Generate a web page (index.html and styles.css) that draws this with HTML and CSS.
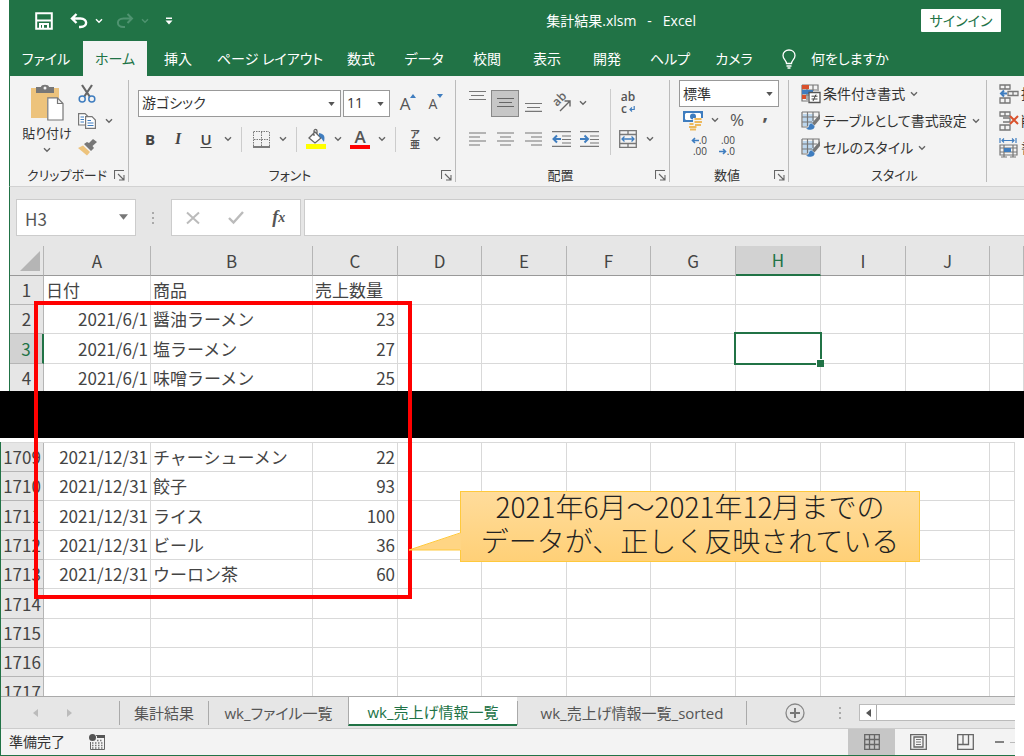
FILE: index.html
```html
<!DOCTYPE html>
<html lang="ja">
<head>
<meta charset="utf-8">
<title>集計結果.xlsm - Excel</title>
<link rel="stylesheet" href="styles.css">
</head>
<body>
<svg class="defs" aria-hidden="true">
  <symbol id="chev" viewBox="0 0 8 6"><path d="M1 1.2 4 4.2 7 1.2" fill="none" stroke="currentColor" stroke-width="1.4"/></symbol>
  <symbol id="tri" viewBox="0 0 8 5"><path d="M0 0H8L4 5Z" fill="currentColor"/></symbol>
  <symbol id="launch" viewBox="0 0 11 11"><path d="M.5 9V.5H10M4 4 9.500 9.500M10 5V10H5" fill="none" stroke="#666" stroke-width="1.100"/></symbol>
  <symbol id="brushgrid" viewBox="0 0 20 20"><rect x="2" y="3" width="11" height="12" fill="#bdd7ee"/><path d="M1 1H18V7M1 1V16H7M1 6H16M1 11H11M6.500 1V15M12 1V10" fill="none" stroke="#777" stroke-width="1.200"/><path d="M19 3 11 12 13.500 14.500 19 8Z" fill="#777"/><path d="M10.500 12.500C7 13 9 17 5 17.500 8 20 14 19 13.500 15Z" fill="#3f7dbf"/></symbol>
</svg>

<main class="stage">
<section class="window window-top">
  <header class="titlebar">
    <div class="quick">
      <button class="q save" aria-label="上書き保存"><svg width="18" height="18" viewBox="0 0 18 18"><path d="M1.200 1.200H16.800V16.800H1.200ZM1.500 8.500H16.500M5 17V12H13V17M8 13V16" fill="none" stroke="#fff" stroke-width="2"/></svg></button>
      <button class="q undo" aria-label="元に戻す"><svg width="18" height="16" viewBox="0 0 18 16"><path d="M6.500 1 2 5.500 6.500 10M2.500 5.500H10.500C18 5.500 18 14 10.500 14H9" fill="none" stroke="#fff" stroke-width="2.400"/></svg></button>
      <button class="q mini" aria-label="元に戻す一覧"><svg width="8" height="6"><use href="#chev"/></svg></button>
      <button class="q redo" aria-label="やり直し"><svg width="18" height="16" viewBox="0 0 18 16"><path d="M11.500 1 16 5.500 11.500 10M15.500 5.500H7.500C0 5.500 0 14 7.500 14H9" fill="none" stroke="#4f9370" stroke-width="2"/></svg></button>
      <button class="q mini dim" aria-label="やり直し一覧"><svg width="8" height="6"><use href="#chev"/></svg></button>
      <button class="q custom" aria-label="クイック アクセス ツール バーのカスタマイズ"><svg width="8" height="8" viewBox="0 0 8 8"><path d="M1 .5H7V2H1ZM.5 3.500H7.500L4 7.500Z" fill="#fff"/></svg></button>
    </div>
    <h1 class="doc">集計結果.xlsm&nbsp;&nbsp; -&nbsp;&nbsp; Excel</h1>
    <div class="account"><button class="signin">サインイン</button></div>
  </header>
  <nav class="tabs">
    <button>ファイル</button><button class="on">ホーム</button><button>挿入</button><button>ページ レイアウト</button><button>数式</button><button>データ</button><button>校閲</button><button>表示</button><button>開発</button><button>ヘルプ</button><button>カメラ</button>
    <button class="tell"><svg width="14" height="20" viewBox="0 0 14 20"><path d="M4.500 14.500C4.500 11 1 10.500 1 6.500 1 3 3.800 1 7 1S13 3 13 6.500C13 10.500 9.500 11 9.500 14.500ZM4.500 17H9.500M5.500 19H8.500" fill="none" stroke="#fff" stroke-width="1.300"/></svg>何をしますか</button>
  </nav>

  <div class="ribbon">
    <section class="group">
      <div class="tools clip">
        <button class="paste"><svg width="35" height="36" viewBox="0 0 35 36"><path d="M1 3H29V13H17V33H1Z" fill="#edc37c"/><path d="M6 2H11C11-1 19-1 19 2H24V8H6Z" fill="#777"/><circle cx="15" cy="3" r="1.500" fill="#f3f3f3"/><path d="M17.800 12.800H27.500L33 18.500V35H17.800ZM27.500 12.800V18.500H33" fill="#fff" stroke="#777" stroke-width="1.200"/></svg><span>貼り付け</span><svg class="cv" width="8" height="6"><use href="#chev"/></svg></button>
        <div class="clipcol">
          <button aria-label="切り取り"><svg width="18" height="18" viewBox="0 0 18 18"><path d="M4 0 12 12M14 0 6 12" stroke="#666" stroke-width="2.200"/><circle cx="4.200" cy="14" r="3" fill="none" stroke="#3f7dbf" stroke-width="1.500"/><circle cx="13.800" cy="14" r="3" fill="none" stroke="#3f7dbf" stroke-width="1.500"/></svg></button>
          <div class="pair"><button aria-label="コピー"><svg width="18" height="16" viewBox="0 0 18 16"><path d="M.6.6H7L10 3.500V12H.6Z" fill="#fff" stroke="#777" stroke-width="1.200"/><path d="M2.500 4H6M2.500 6.500H6M2.500 9H6" stroke="#3f7dbf"/><path d="M7.600 3.600H14L17.400 7V15.400H7.600Z" fill="#fff" stroke="#777" stroke-width="1.200"/><path d="M9.500 7.500H13M9.500 10H15.500M9.500 12.500H15.500" stroke="#3f7dbf" stroke-width="1.200"/></svg></button><button class="cvb" aria-label="コピーの一覧"><svg width="8" height="6"><use href="#chev"/></svg></button></div>
          <button aria-label="書式のコピー"><svg width="20" height="17" viewBox="0 0 20 17"><path d="M15 0 19 3 14.500 7 16 9 13 12 6 5 9 3 11 4Z" fill="#777"/><path d="M5 6.500 12 13 9 16.500 0 9Z" fill="#edc37c"/></svg></button>
        </div>
      </div>
      <footer><span>クリップボード</span><button aria-label="クリップボードの詳細"><svg width="11" height="11"><use href="#launch"/></svg></button></footer>
    </section>

    <section class="group">
      <div class="tools stack">
        <div class="row first">
          <label class="combo face"><select aria-label="フォント"><option>游ゴシック</option></select><svg width="7" height="4"><use href="#tri"/></svg></label>
          <label class="combo size"><select aria-label="フォント サイズ"><option>11</option></select><svg width="7" height="4"><use href="#tri"/></svg></label>
          <button class="b28 grow" aria-label="拡大"><span>A</span><svg width="6" height="4" viewBox="0 0 6 4"><path d="M0 4H6L3 0Z" fill="#3f7dbf"/></svg></button>
          <button class="b28 grow shrink" aria-label="縮小"><span>A</span><svg width="6" height="4" viewBox="0 0 6 4"><path d="M0 0H6L3 4Z" fill="#3f7dbf"/></svg></button>
        </div>
        <div class="row">
          <button class="b28 bold">B</button><button class="b28 ital">I</button><button class="b28 under">U</button><button class="cvb" aria-label="下線の一覧"><svg width="8" height="6"><use href="#chev"/></svg></button><i class="sep"></i>
          <button class="b28" aria-label="罫線"><svg width="17" height="17" viewBox="0 0 17 17"><path d="M.5 1V15M.5.5H16M16.500 1V15M8.500 1V15M1 8.500H16" fill="none" stroke="#777" stroke-dasharray="1.500 1"/><path d="M0 16H17" stroke="#555" stroke-width="1.500"/></svg></button><button class="cvb" aria-label="罫線の一覧"><svg width="8" height="6"><use href="#chev"/></svg></button><i class="sep"></i>
          <button class="b28" aria-label="塗りつぶしの色"><svg width="20" height="20" viewBox="0 0 20 20"><path d="M9 3 15 9 9 14 3 9ZM8 7V2C8 0 11 0 11 2V5" fill="#fff" stroke="#666" stroke-width="1.300"/><path d="M13 4C19 5 19 8 18 13 16 11 16 9 13 7Z" fill="#3f7dbf"/><path d="M0 15H20V20H0Z" fill="#ff0"/></svg></button><button class="cvb" aria-label="塗りつぶしの一覧"><svg width="8" height="6"><use href="#chev"/></svg></button>
          <button class="b28 fontcolor" aria-label="フォントの色">A</button><button class="cvb" aria-label="フォントの色の一覧"><svg width="8" height="6"><use href="#chev"/></svg></button><i class="sep"></i>
          <button class="b28 ruby" aria-label="ふりがな"><span>ア</span><span>亜</span></button><button class="cvb" aria-label="ふりがなの一覧"><svg width="8" height="6"><use href="#chev"/></svg></button>
        </div>
      </div>
      <footer><span>フォント</span><button aria-label="フォントの詳細"><svg width="11" height="11"><use href="#launch"/></svg></button></footer>
    </section>

    <section class="group">
      <div class="tools align">
        <div class="stack">
          <div class="row first">
            <button class="b28" aria-label="上揃え"><svg class="lift" width="17" height="18" viewBox="0 0 17 18"><path d="M0 1.500H17M2 5.500H15M0 9.500H17" stroke="#777" stroke-width="1.200"/></svg></button>
            <button class="b28 pressed" aria-label="上下中央揃え"><svg width="17" height="18" viewBox="0 0 17 18"><path d="M0 4.500H17M2 8.500H15M0 12.500H17" stroke="#666" stroke-width="1.200"/></svg></button>
            <button class="b28" aria-label="下揃え"><svg width="17" height="18" viewBox="0 0 17 18"><path d="M0 9.500H17M2 13.500H15M0 17.400H17" stroke="#777" stroke-width="1.200"/></svg></button>
            <button class="b28" aria-label="方向"><svg width="20" height="20" viewBox="0 0 20 20"><text x="6" y="14" transform="rotate(-45 6 14)" font-family="Open Sans" font-weight="600" font-size="12" fill="#666">ab</text><path d="M9 18 18.500 8.500M13.500 8H19V13.500" fill="none" stroke="#666" stroke-width="1.400"/></svg></button><button class="cvb" aria-label="方向の一覧"><svg width="8" height="6"><use href="#chev"/></svg></button>
          </div>
          <div class="row">
            <button class="b28" aria-label="左揃え"><svg width="17" height="14" viewBox="0 0 17 14"><path d="M0 1H17M0 5H11M0 9H17M0 13H11" stroke="#777" stroke-width="1.200"/></svg></button>
            <button class="b28" aria-label="中央揃え"><svg width="17" height="14" viewBox="0 0 17 14"><path d="M0 1H17M3 5H14M0 9H17M3 13H14" stroke="#777" stroke-width="1.200"/></svg></button>
            <button class="b28" aria-label="右揃え"><svg width="17" height="14" viewBox="0 0 17 14"><path d="M0 1H17M6 5H17M0 9H17M6 13H17" stroke="#777" stroke-width="1.200"/></svg></button>
            <button class="b28" aria-label="インデントを減らす"><svg width="19" height="16" viewBox="0 0 19 16"><path d="M0 .6H19M10 5H19M10 8.500H19M10 12H19M0 15.400H19" stroke="#777" stroke-width="1.200"/><path d="M9 8H2M5 4.500 1.500 8 5 11.500" fill="none" stroke="#3f7dbf" stroke-width="2"/></svg></button>
            <button class="b28" aria-label="インデントを増やす"><svg width="19" height="16" viewBox="0 0 19 16"><path d="M0 .6H19M10 5H19M10 8.500H19M10 12H19M0 15.400H19" stroke="#777" stroke-width="1.200"/><path d="M0 8H7M4.500 4.500 8 8 4.500 11.500" fill="none" stroke="#3f7dbf" stroke-width="2"/></svg></button>
          </div>
        </div>
        <i class="sep tall"></i>
        <div class="stack">
          <div class="row first"><button class="b28 wrap" aria-label="折り返して全体を表示する"><span>ab</span><span>c<svg width="6" height="6" viewBox="0 0 6 6"><path d="M5.200 0V3.500H1M3 1.500 1 3.500 3 5.500" fill="none" stroke="#3f7dbf" stroke-width="1.200"/></svg></span></button></div>
          <div class="row"><button class="b28" aria-label="セルを結合して中央揃え"><svg width="18" height="18" viewBox="0 0 18 18"><path d="M.7.7H17.300V17.300H.7ZM1 4.500H17M1 13.500H17M9 1V4M9 14V17" fill="none" stroke="#777" stroke-width="1.300"/><path d="M3 9H15M5.500 6.500 3 9 5.500 11.500M12.500 6.500 15 9 12.500 11.500" fill="none" stroke="#3f7dbf" stroke-width="1.300"/></svg></button><button class="cvb" aria-label="結合の一覧"><svg width="8" height="6"><use href="#chev"/></svg></button></div>
        </div>
      </div>
      <footer><span>配置</span><button aria-label="配置の詳細"><svg width="11" height="11"><use href="#launch"/></svg></button></footer>
    </section>

    <section class="group">
      <div class="tools number">
        <label class="combo fmt"><select aria-label="表示形式"><option>標準</option></select><svg width="7" height="4"><use href="#tri"/></svg></label>
        <div class="row">
          <button class="b28" aria-label="通貨表示形式"><svg width="20" height="20" viewBox="0 0 20 20"><path d="M1 2H19V11H1Z" fill="#fff" stroke="#3f7dbf" stroke-width="2"/><circle cx="10" cy="6.500" r="3" fill="#3f7dbf"/><path d="M1 2H4L1 5ZM19 2V5L16 2ZM1 11V8L4 11Z" fill="#3f7dbf"/><path d="M10 8H20V16H14V20H5V13H10Z" fill="#f3f3f3"/><path d="M11.500 9H18.500M11.500 12H19M12 15H18M6.500 14H10.500M6 17H13.500M7 19.500H13" stroke="#edb95e" stroke-width="2"/></svg></button><button class="cvb" aria-label="通貨の一覧"><svg width="8" height="6"><use href="#chev"/></svg></button><button class="b28 pct" aria-label="パーセント">%</button><button class="b28 comma" aria-label="桁区切り">&rsquo;</button>
        </div>
        <div class="row dec">
          <button class="b28" aria-label="小数点以下の表示桁数を増やす"><span><svg width="8" height="7" viewBox="0 0 8 7"><path d="M8 3.500H1.500M4 1 1.500 3.500 4 6" fill="none" stroke="#3f7dbf" stroke-width="1.600"/></svg>.0</span><span>.00</span></button>
          <button class="b28" aria-label="小数点以下の表示桁数を減らす"><span>.00</span><span><svg width="8" height="7" viewBox="0 0 8 7"><path d="M0 3.500H6.500M4 1 6.500 3.500 4 6" fill="none" stroke="#3f7dbf" stroke-width="1.600"/></svg>.0</span></button>
        </div>
      </div>
      <footer><span>数値</span><button aria-label="数値の詳細"><svg width="11" height="11"><use href="#launch"/></svg></button></footer>
    </section>

    <section class="group">
      <div class="tools list">
        <button><svg width="20" height="20" viewBox="0 0 20 20"><path d="M1 1H17V7M1 1V17H7M1 6H16M1 11H8M6 1V16M12 1V7" fill="none" stroke="#777" stroke-width="1.200"/><path d="M1 1H8V5H1ZM1 11H5V15H1Z" fill="#d9512c"/><path d="M1 6H12V10H1Z" fill="#3f7dbf"/><path d="M8 8.500H19V18.500H8Z" fill="#fff" stroke="#555" stroke-width="1.300"/><path d="M10.500 12.200H16.500M10.500 15H16.500M15 10.500 12 17" stroke="#444"/></svg>条件付き書式<svg class="cv" width="8" height="6"><use href="#chev"/></svg></button>
        <button><svg width="20" height="20"><use href="#brushgrid"/></svg>テーブルとして書式設定<svg class="cv" width="8" height="6"><use href="#chev"/></svg></button>
        <button><svg width="20" height="20"><use href="#brushgrid"/></svg>セルのスタイル<svg class="cv" width="8" height="6"><use href="#chev"/></svg></button>
      </div>
      <footer><span>スタイル</span></footer>
    </section>

    <section class="group cells">
      <div class="tools list">
        <button><svg width="20" height="20" viewBox="0 0 20 20"><path d="M1 1H11V5H1ZM6 1V5M1 14H11V19H1ZM6 14V19M9 7.500H19V11.500H9ZM14 7.500V11.500" fill="none" stroke="#777" stroke-width="1.300"/><path d="M8 9.500H2M5 6.500 2 9.500 5 12.500" fill="none" stroke="#3f7dbf" stroke-width="2"/></svg>挿入</button>
        <button><svg width="20" height="20" viewBox="0 0 20 20"><path d="M1 1H11V5H1ZM6 1V5M1 14H11V19H1ZM6 14V19M4 7H11V11H4" fill="none" stroke="#777" stroke-width="1.300"/><path d="M11 5 19 13M19 5 11 13" stroke="#d9512c" stroke-width="2"/></svg>削除</button>
        <button><svg width="20" height="20" viewBox="0 0 20 20"><path d="M1 0V5M17 0V5M3 2.500H15M5 .5 3 2.500 5 4.500M13 .5 15 2.500 13 4.500" fill="none" stroke="#3f7dbf" stroke-width="1.200"/><path d="M1 7H18V17H1ZM1 10H18M1 14H18M5 7V19M14 7V19M2 19H8M11 19H17" fill="none" stroke="#777" stroke-width="1.200"/><path d="M5 10H12V14H5Z" fill="#3f7dbf"/></svg>書式</button>
      </div>
      <footer></footer>
    </section>
  </div>

  <div class="formula">
    <label class="namebox"><input aria-label="名前ボックス" value="H3"><svg width="9" height="6"><use href="#tri"/></svg></label>
    <i class="dots"></i>
    <div class="fxbox">
      <button aria-label="キャンセル"><svg width="14" height="12" viewBox="0 0 14 12"><path d="M1 .5 13 11.500M13 .5 1 11.500" stroke="#bbb" stroke-width="2"/></svg></button>
      <button aria-label="入力"><svg width="16" height="13" viewBox="0 0 16 13"><path d="M1 7 5.500 11.500 15 1" fill="none" stroke="#bbb" stroke-width="2.400"/></svg></button>
      <button class="fx" aria-label="関数の挿入">f<small>x</small></button>
    </div>
    <input class="expr" aria-label="数式バー">
  </div>

  <table class="grid">
    <colgroup><col class="n"><col class="a"><col class="b"><col class="c85"><col class="c84"><col class="c85"><col class="c84"><col class="c85"><col class="c85"><col class="c85"><col class="c84"><col></colgroup>
    <thead><tr><th class="corner"><svg width="20" height="20" viewBox="0 0 20 20"><path d="M20 0V20H0Z" fill="#b5b5b5"/></svg></th><th>A</th><th>B</th><th>C</th><th>D</th><th>E</th><th>F</th><th>G</th><th class="sel">H</th><th>I</th><th>J</th><th></th></tr></thead>
    <tbody>
    <tr><th>1</th><td>日付</td><td>商品</td><td>売上数量</td><td></td><td></td><td></td><td></td><td></td><td></td><td></td><td></td></tr>
    <tr><th>2</th><td class="r">2021/6/1</td><td>醤油ラーメン</td><td class="r">23</td><td></td><td></td><td></td><td></td><td></td><td></td><td></td><td></td></tr>
    <tr><th class="sel">3</th><td class="r">2021/6/1</td><td>塩ラーメン</td><td class="r">27</td><td></td><td></td><td></td><td></td><td class="cursor"></td><td></td><td></td><td></td></tr>
    <tr class="cut"><th>4</th><td class="r">2021/6/1</td><td>味噌ラーメン</td><td class="r">25</td><td></td><td></td><td></td><td></td><td></td><td></td><td></td><td></td></tr>
    </tbody>
  </table>
</section>

<div class="band"></div>

<section class="window window-bottom">
  <div class="pane">
  <table class="grid">
    <colgroup><col class="n2"><col class="a"><col class="b"><col class="c85"><col class="c84"><col class="c85"><col class="c84"><col class="c85"><col class="c85"><col class="c85"><col class="c84"><col></colgroup>
    <tbody>
    <tr><th>1709</th><td class="r">2021/12/31</td><td>チャーシューメン</td><td class="r">22</td><td></td><td></td><td></td><td></td><td></td><td></td><td></td><td></td></tr>
    <tr><th>1710</th><td class="r">2021/12/31</td><td>餃子</td><td class="r">93</td><td></td><td></td><td></td><td></td><td></td><td></td><td></td><td></td></tr>
    <tr><th>1711</th><td class="r">2021/12/31</td><td>ライス</td><td class="r">100</td><td></td><td></td><td></td><td></td><td></td><td></td><td></td><td></td></tr>
    <tr><th>1712</th><td class="r">2021/12/31</td><td>ビール</td><td class="r">36</td><td></td><td></td><td></td><td></td><td></td><td></td><td></td><td></td></tr>
    <tr><th>1713</th><td class="r">2021/12/31</td><td>ウーロン茶</td><td class="r">60</td><td></td><td></td><td></td><td></td><td></td><td></td><td></td><td></td></tr>
    <tr><th>1714</th><td></td><td></td><td></td><td></td><td></td><td></td><td></td><td></td><td></td><td></td><td></td></tr>
    <tr><th>1715</th><td></td><td></td><td></td><td></td><td></td><td></td><td></td><td></td><td></td><td></td><td></td></tr>
    <tr><th>1716</th><td></td><td></td><td></td><td></td><td></td><td></td><td></td><td></td><td></td><td></td><td></td></tr>
    <tr><th>1717</th><td></td><td></td><td></td><td></td><td></td><td></td><td></td><td></td><td></td><td></td><td></td></tr>
    </tbody>
  </table>
  </div>
  <nav class="sheets">
    <div class="arrows"><button aria-label="前のシート"><svg width="5" height="8" viewBox="0 0 5 8"><path d="M5 0V8L0 4Z" fill="#bbb"/></svg></button><button aria-label="次のシート"><svg width="5" height="8" viewBox="0 0 5 8"><path d="M0 0V8L5 4Z" fill="#bbb"/></svg></button></div>
    <button class="sheet s1">集計結果</button><button class="sheet s2">wk_ファイル一覧</button><button class="sheet s3 on">wk_売上げ情報一覧</button><button class="sheet s4">wk_売上げ情報一覧_sorted</button>
    <button class="add" aria-label="新しいシート"><svg width="20" height="20" viewBox="0 0 20 20"><circle cx="10" cy="10" r="9" fill="none" stroke="#888" stroke-width="1.300"/><path d="M5 10H15M10 5V15" stroke="#777" stroke-width="2"/></svg></button>
    <i class="dots"></i>
    <div class="scroll"><button aria-label="左へスクロール"><svg width="5" height="8" viewBox="0 0 5 8"><path d="M5 0V8L0 4Z" fill="#555"/></svg></button></div>
  </nav>
  <footer class="status">
    <span>準備完了</span>
    <button class="macro" aria-label="マクロの記録"><svg width="16" height="16" viewBox="0 0 16 16"><path d="M7 1.500H15.500V15.500H1.500V8" fill="none" stroke="#666"/><path d="M8 1H16V4H8Z" fill="#555"/><circle cx="3.500" cy="3.500" r="3.500" fill="#555"/><path d="M3 9H14M3 11.500H14M3 14H14M8 6.500H14" stroke="#777" stroke-width="1.300" stroke-dasharray="1.500 1.500"/></svg></button>
    <div class="views">
      <button class="on" aria-label="標準"><svg width="16" height="16" viewBox="0 0 16 16"><path d="M.7.7H15.300V15.300H.7ZM.7 5.500H15.300M.7 10.500H15.300M5.500.7V15.300M10.500.7V15.300" fill="none" stroke="#666" stroke-width="1.300"/></svg></button>
      <button aria-label="ページ レイアウト"><svg width="17" height="16" viewBox="0 0 17 16"><path d="M.7.7H16.300V15.300H.7ZM4 3H13V13H4Z" fill="none" stroke="#666" stroke-width="1.300"/><path d="M6 5.500H11M6 8H11M6 10.500H11" stroke="#777"/></svg></button>
      <button aria-label="改ページ プレビュー"><svg width="17" height="16" viewBox="0 0 17 16"><path d="M.7.7H16.300V15.300H.7ZM.7 10.500H11.500V.7M6 .7V10.500" fill="none" stroke="#666" stroke-width="1.300"/></svg></button>
      <button class="minus" aria-label="縮小"><svg width="20" height="4" viewBox="0 0 20 4"><path d="M0 2H9" stroke="#666" stroke-width="1.600"/><path d="M15 2.500H20" stroke="#bbb"/></svg></button>
    </div>
  </footer>
</section>

<div class="frame"></div>
<aside class="callout">
  <svg width="52" height="20" viewBox="0 0 52 20"><path d="M52 1 0 18H52Z" fill="#ffd584"/><path d="M51 1 0 18H51" fill="none" stroke="#ffc93c"/></svg>
  <p>2021年6月～2021年12月までの</p><p>データが、正しく反映されている</p>
</aside>
</main>
</body>
</html>
```

FILE: styles.css
```css
* { box-sizing: border-box; }
body { margin: 0; background: #fff; color: #333; font: 14px/20px "Open Sans", "Noto Sans CJK JP", sans-serif; font-feature-settings: "palt"; }
button { margin: 0; padding: 0; border: 0; background: none; color: inherit; font: inherit; font-feature-settings: inherit; white-space: nowrap; display: flex; align-items: center; justify-content: center; }
input, select { font: inherit; font-feature-settings: inherit; color: inherit; border-radius: 0; }
svg { display: block; flex: none; overflow: visible; }
.defs { position: absolute; width: 0; height: 0; }
.stage { position: relative; display: flex; flex-direction: column; height: 100vh; overflow: hidden; }
.window-top { flex: none; margin-left: 9px; }

/* title bar */
.titlebar { display: flex; align-items: center; height: 41px; background: #217346; color: #fff; }
.quick { display: flex; flex: 1; align-items: center; padding-left: 26px; }
.q { height: 24px; width: 28px; }
.save { width: 18px; }
.undo { margin-left: 12px; }
.mini { width: 12px; }
.redo { margin-left: 6px; }
.dim { color: #4f9370; }
.custom { margin-left: 4px; }
.doc { margin: 0; font-size: 14px; line-height: 20px; font-weight: 400; white-space: pre; }
.account { display: flex; justify-content: flex-end; width: 328px; padding-right: 23px; }
.signin { width: 80px; height: 23px; background: #fff; color: #217346; border-radius: 1px; }

.tabs { display: grid; grid-template-columns: 74px 64px 62px 122px 60px 66px 60px 60px 60px 66px 62px 1fr; height: 35px; background: #217346; color: #fff; }
.tabs .on { background: #f3f3f3; color: #217346; }
.tabs .tell { justify-content: flex-start; gap: 15px; padding-left: 17px; }

/* ribbon */
.ribbon { display: grid; grid-template-columns: 119px 327px 214px 119px 198px 1fr; height: 111px; overflow: hidden; padding: 4px 0; background: #f3f3f3; border-bottom: 1px solid #d2d2d2; border-left: 1px solid #217346; }
.group { display: flex; flex-direction: column; min-width: 0; border-right: 1px solid #bbb; }
.tools { flex: 1; min-height: 0; }
.group footer { display: flex; align-items: center; justify-content: center; height: 20px; padding-top: 6px; font-size: 13px; }
.group footer span { flex: 1; text-align: center; padding-left: 14px; white-space: nowrap; }
.group footer button { width: 18px; height: 18px; }
.cv, .cvb { color: #666; }
.cvb { width: 16px; height: 24px; }
.clip { display: flex; padding: 5px 0 0 12px; }
.paste { flex-direction: column; justify-content: flex-start; width: 50px; font-size: 13px; }
.paste span { line-height: 24px; }
.paste .cv { margin-top: 2px; }
.clipcol { display: flex; flex-direction: column; align-items: flex-start; gap: 10px; padding-left: 6px; }
.pair { display: flex; align-items: center; height: 16px; gap: 5px; }
.stack { display: flex; flex-direction: column; gap: 8px; }
.tools.stack { padding: 9px 0 0 7px; }
.row { display: flex; align-items: center; height: 28px; }
.b28 { width: 28px; height: 27px; }
.sep { width: 1px; height: 25px; margin: 0 5px; background: #ccc; }
.sep.tall { height: 66px; margin: 0 3px 0 7px; }
.combo { position: relative; display: block; background: #fff; }
.combo select { display: block; width: 100%; height: 27px; padding: 0 3px; border: 1px solid #999; background: #fff; appearance: none; }
.combo svg { position: absolute; right: 6px; top: 12px; color: #555; pointer-events: none; }
.face { width: 203px; margin: 0 2px; }
.size { width: 47px; margin-right: 4px; }
.grow { align-items: flex-start; font-size: 17px; line-height: 27px; color: #555; }
.grow svg { margin-top: 4px; }
.shrink { font-size: 14px; }
.bold { font-weight: 700; font-size: 15px; color: #444; }
.ital { font: italic 700 16px "Liberation Serif", serif; color: #444; }
.under { font-weight: 600; font-size: 15px; text-decoration: underline; color: #444; text-underline-offset: 2px; }
.fontcolor { font-size: 17px; font-weight: 600; color: #555; line-height: 16px; width: 20px; height: 20px; margin: 0 4px; align-items: flex-start; border-bottom: 4px solid #f00; }
.ruby { flex-direction: column; font-size: 10px; line-height: 10px; font-weight: 700; color: #555; }
.align { display: flex; padding: 9px 0 0 7px; }
.pressed { background: #c6c6c6; border: 1px solid #888; }
.lift { margin-bottom: 9px; }
.wrap { flex-direction: column; font-size: 12px; line-height: 12px; font-weight: 600; color: #555; }
.wrap span { display: flex; align-items: center; gap: 2px; }
.number { display: flex; flex-direction: column; padding-left: 9px; }
.number .row { height: 26px; }
.fmt { width: 100px; }
.pct { font-size: 17px; color: #555; }
.comma { padding-top: 10px; font-size: 20px; font-weight: 700; color: #555; }
.dec .b28 { flex-direction: column; font-size: 10px; line-height: 11px; color: #444; }
.dec .b28 span { display: flex; align-items: center; align-self: flex-end; }
.list { display: flex; flex-direction: column; gap: 7px; padding: 4px 0 0 12px; }
.list button { height: 20px; justify-content: flex-start; gap: 2px; }
.list .cv { margin-left: 3px; }
.cells { border-right: 0; }

/* formula bar */
.formula { display: flex; align-items: stretch; height: 59px; padding: 12px 0 10px 6px; background: #e6e6e6; border-left: 1px solid #217346; }
.namebox { position: relative; width: 120px; }
.namebox input { width: 100%; height: 37px; padding: 2px 8px 0; border: 1px solid #ccc; background: #fff; font: 17px "Noto Sans CJK JP", sans-serif; color: #555; }
.namebox svg { position: absolute; right: 8px; top: 15px; color: #777; }
.dots { align-self: center; width: 2px; height: 12px; background: repeating-linear-gradient(#aaa 0 2px, transparent 2px 5px); }
.formula .dots { margin: 0 17px 0 16px; }
.fxbox { display: flex; justify-content: space-around; width: 130px; border: 1px solid #ccc; background: #fff; }
.fxbox button { width: 42px; }
.fx { font: italic 700 18px "Liberation Serif", serif; color: #555; }
.fx small { font-size: 14px; }
.expr { flex: 1; min-width: 0; margin-left: 3px; border: 1px solid #ccc; border-right: 0; background: #fff; }

/* worksheet */
.grid { width: 100%; table-layout: fixed; border-collapse: separate; border-spacing: 0; font: 17px/24px "Noto Sans CJK JP", sans-serif; font-feature-settings: normal; color: #444; }
.window-top .grid { border-left: 1px solid #217346; }
.n { width: 34px; }
.n2 { width: 43px; }
.a { width: 107px; }
.b { width: 162px; }
.c84 { width: 84px; }
.c85 { width: 85px; }
.grid th { padding: 0; font-weight: 400; background: #e6e6e6; border: solid #b5b5b5; border-width: 0 1px 1px 0; white-space: nowrap; }
.grid thead th { height: 30px; border-bottom-color: #999; }
.grid td { height: 29px; padding: 0 2px; border: solid #d9d9d9; border-width: 0 1px 1px 0; background: #fff; white-space: nowrap; }
.grid tbody tr:nth-child(3n) td { height: 30px; }
.grid .cut td { height: 27px; }
.grid .cut th, .grid .cut td { border-bottom: 0; }
.grid .r { text-align: right; }
.grid .sel { background: #d2d2d2; color: #217346; }
.grid thead .sel { border-bottom: 2px solid #217346; }
.grid tbody .sel { border-right: 2px solid #217346; }
.grid .corner { vertical-align: bottom; }
.corner svg { margin: 0 3px 4px auto; }
.grid .cursor { position: relative; }
.cursor::before { content: ""; position: absolute; inset: -2px; border: 2px solid #217346; }
.cursor::after { content: ""; position: absolute; right: -4px; bottom: -4px; width: 7px; height: 7px; background: #217346; border: solid #fff; border-width: 1px 0 0 1px; }

.band { flex: none; height: 47px; background: #000; margin-bottom: 4px; }

.window-bottom { display: flex; flex-direction: column; flex: 1; min-height: 0; margin-right: 9px; border-left: 1px solid #217346; }
.pane { flex: 1; min-height: 0; overflow: hidden; border-top: 1px solid #d9d9d9; }
.sheets { display: flex; align-items: center; height: 33px; border-top: 1px solid #aaa; background: #e6e6e6; border-bottom: 1px solid #ccc; color: #555; font-size: 15px; }
.arrows { display: flex; width: 118px; gap: 14px; padding-left: 24px; }
.arrows button { width: 20px; height: 20px; }
.sheet { height: 24px; border-left: 1px solid #aaa; }
.s1 { width: 89px; }
.s2 { width: 140px; }
.s3 { width: 169px; }
.s4 { width: 230px; border-right: 1px solid #aaa; }
.sheet.on { align-self: flex-start; height: 29px; padding-top: 2px; background: #fff; color: #217346; border-bottom: 2px solid #217346; }
.add { width: 28px; height: 28px; margin-left: 34px; }
.sheets .dots { margin: 0 18px 0 30px; }
.scroll { flex: 1; height: 17px; border: 1px solid #bbb; border-right: 0; background: #fff; }
.scroll button { width: 17px; height: 15px; border-right: 1px solid #aaa; }
.status { display: flex; align-items: stretch; height: 27px; padding-left: 8px; background: #f3f3f3; border-bottom: 1px solid #217346; }
.status span { align-self: center; }
.macro { width: 28px; margin-left: 18px; }
.views { display: flex; margin-left: auto; }
.views button { width: 47px; }
.views .on { background: #c6c6c6; }
.views .minus { width: 26px; justify-content: flex-end; }

/* annotations laid over both windows */
.frame { position: absolute; left: 34px; top: 301px; width: 378px; height: 298px; border: 4px solid #f00; }
.callout { position: absolute; left: 460px; top: 491px; width: 460px; border: 1px solid #ffc93c; background: linear-gradient(#ffdc9b, #ffd077); padding-bottom: 4px; color: #222; font: 300 28px/34px "Noto Sans CJK JP", sans-serif; font-feature-settings: normal; text-align: center; }
.callout p { margin: 0; white-space: nowrap; }
.callout p:first-of-type { margin-top: -3px; }
.callout svg { position: absolute; left: -52px; top: 40px; }
```
